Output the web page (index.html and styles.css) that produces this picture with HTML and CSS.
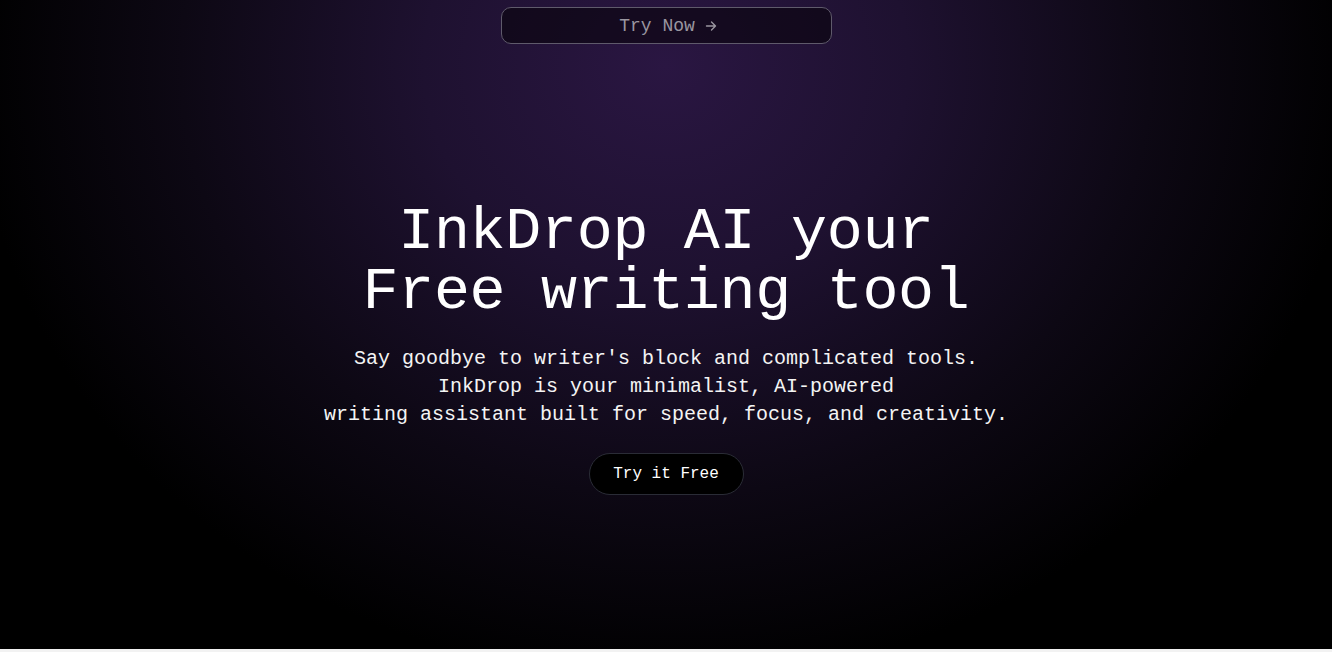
FILE: index.html
```html
<!DOCTYPE html>
<html lang="en">
<head>
<meta charset="utf-8">
<title>InkDrop AI</title>
<link rel="stylesheet" href="styles.css">
</head>
<body>
<section class="hero">
  <header class="topbar">
    <a class="try-now" href="#">Try Now <span class="arrow">
      <svg width="12" height="12" viewBox="0 0 12 12" fill="none" stroke="currentColor" stroke-width="1.4" stroke-linecap="round" stroke-linejoin="round"><path d="M1.5 6h9M6.5 2l4 4-4 4"/></svg>
    </span></a>
  </header>
  <div class="content">
    <h1 class="title"><span class="line">InkDrop AI your</span><span class="line">Free writing tool</span></h1>
    <p class="lead">Say goodbye to writer's block and complicated tools.<br>InkDrop is your minimalist, AI-powered<br>writing assistant built for speed, focus, and creativity.</p>
    <a class="cta" href="#">Try it Free</a>
  </div>
</section>
</body>
</html>
```
FILE: styles.css
```css
* { box-sizing: border-box; }
html, body { margin: 0; padding: 0; }
body {
  background: #f2f2f2;
  font-family: "Liberation Mono", "Courier New", monospace;
}
.hero {
  height: 649px;
  display: flex;
  flex-direction: column;
  align-items: center;
  background:
    radial-gradient(ellipse 52% 95% at 50% 10%, #2a1642 0%, #1e1130 35%, #0d0814 70%, #000 100%);
  color: #fff;
}
.topbar {
  padding-top: 7px;
  display: flex;
  justify-content: center;
}
.try-now {
  width: 331px;
  height: 37px;
  display: flex;
  align-items: center;
  justify-content: center;
  gap: 10px;
  padding-left: 4px;
  border: 1px solid #5f5a6b;
  border-radius: 10px;
  background: rgba(8, 4, 12, 0.6);
  color: #9a96a0;
  font-size: 18px;
  text-decoration: none;
}
.arrow { display: inline-flex; margin-top: 1px; }
.content {
  display: flex;
  flex-direction: column;
  align-items: center;
  text-align: center;
  padding-top: 158px;
}
.title {
  margin: 0;
  display: flex;
  flex-direction: column;
  align-items: center;
  font-weight: 400;
  font-size: 60px;
  line-height: 60px;
  letter-spacing: -0.3px;
  color: #fff;
}
.line { display: block; }
.lead {
  margin: 23px 0 0;
  font-size: 20px;
  line-height: 28px;
  color: #f4f4f4;
}
.cta {
  margin-top: 24px;
  width: 155px;
  height: 42px;
  display: flex;
  align-items: center;
  justify-content: center;
  border: 1px solid #2a2c36;
  border-radius: 21px;
  background: #000;
  color: #fff;
  font-size: 16px;
  text-decoration: none;
}
```
